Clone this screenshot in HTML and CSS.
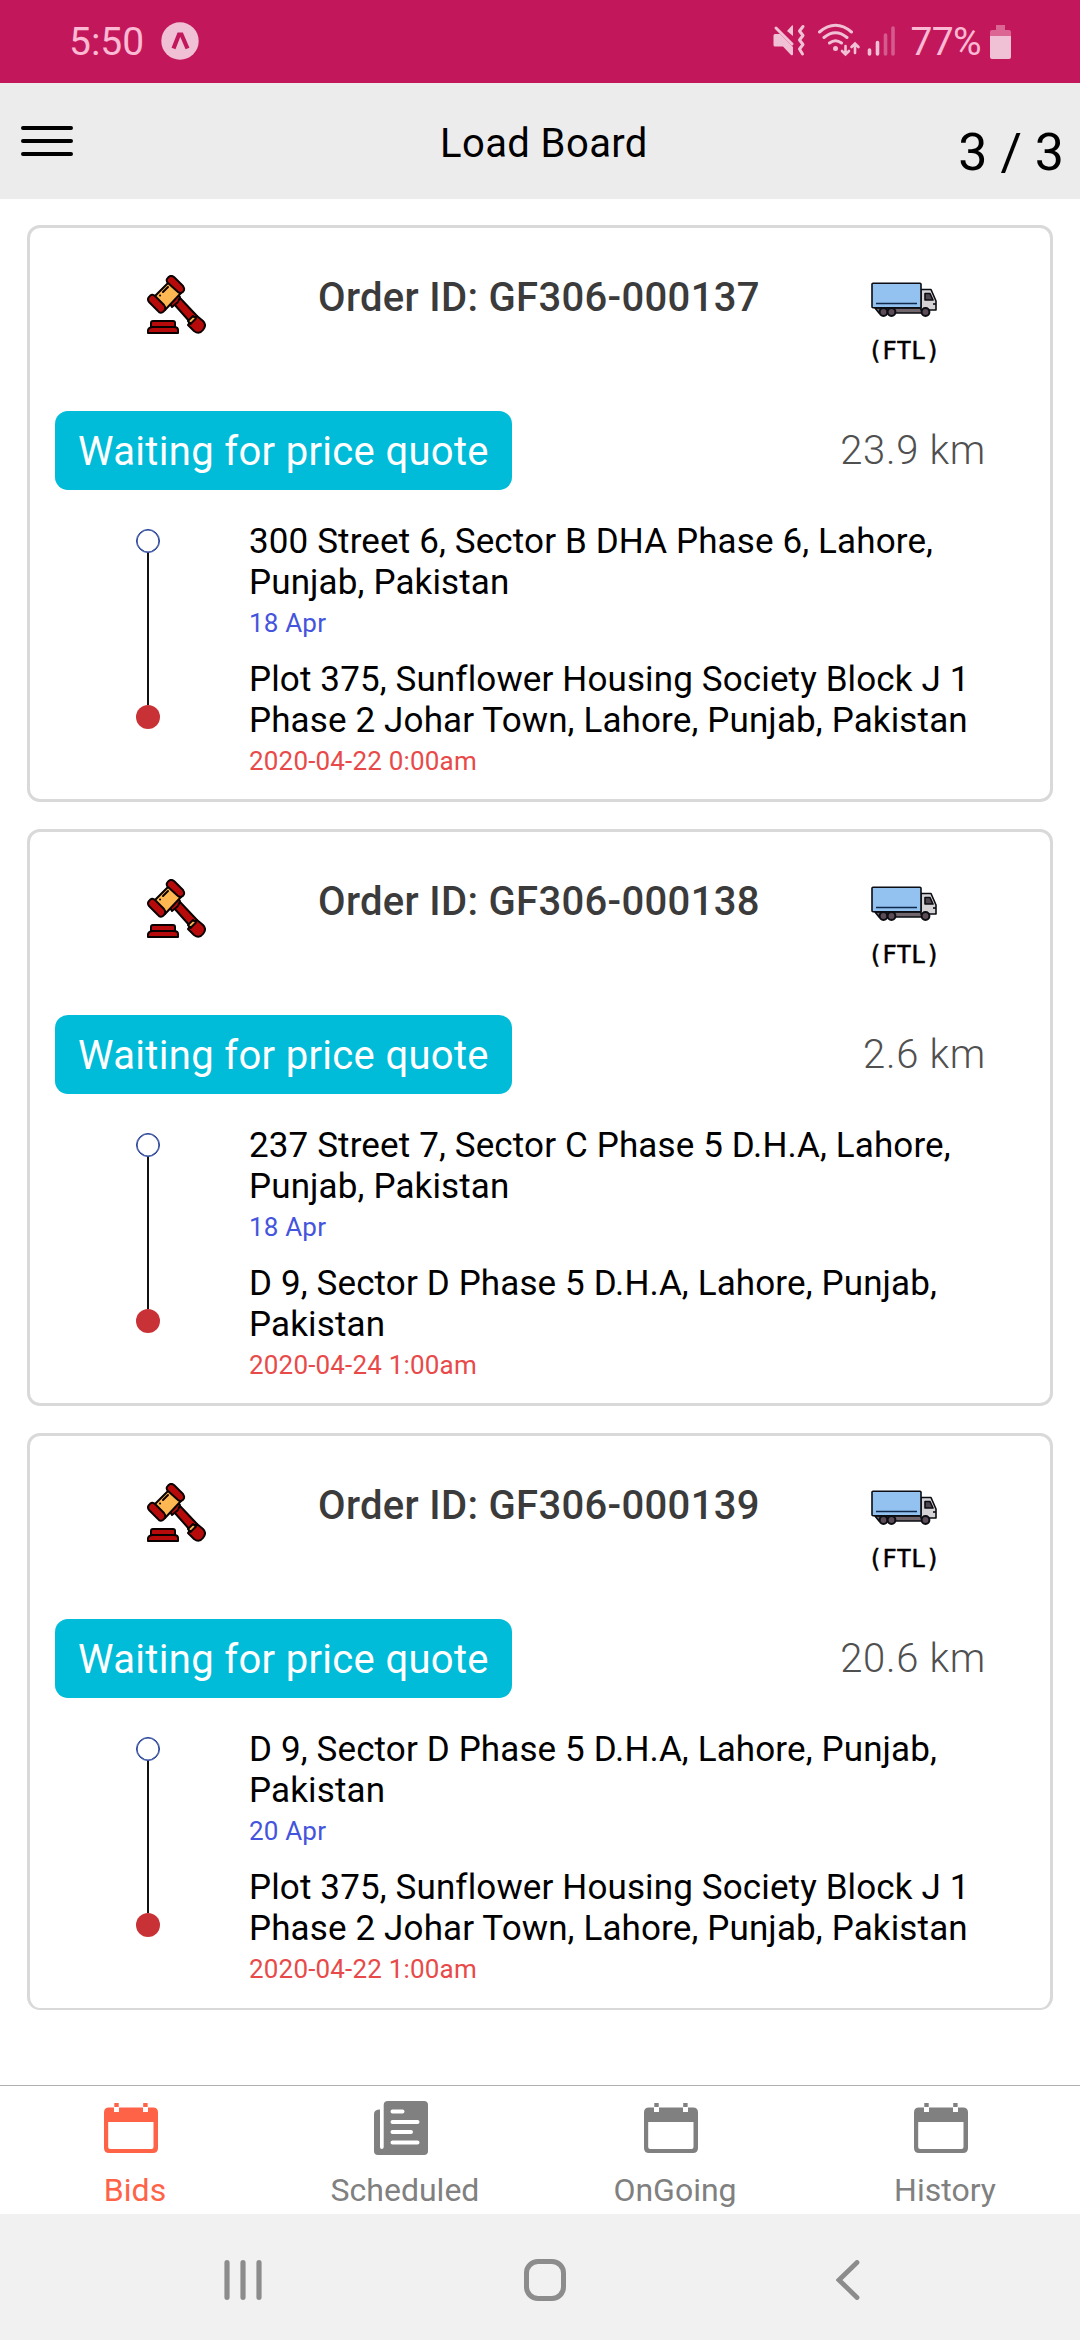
FILE: index.html
```html
<!DOCTYPE html>
<html lang="en">
<head>
<meta charset="utf-8">
<title>Load Board</title>
<link rel="stylesheet" href="styles.css">
</head>
<body>
<svg class="sprite" aria-hidden="true">
  <symbol id="gavel" viewBox="0 0 59 59">
    <g stroke="#0a0000" stroke-width="2" stroke-linejoin="round">
      <path d="M27 29 33 23 50 41 43 47Z" fill="#b70b0b"/>
      <path d="M43 47 50 41 56 46Q60 50 56 55 52 60 47 56L41 50Z" fill="#b70b0b"/>
      <path d="M41 46 46 41 49 43.500 43.500 49Z" fill="#ffb851"/>
      <path d="M21 26 30 18 33 22 31 27 25 32Z" fill="#b70b0b"/>
      <path d="M7 22 22 7 34 18 18 35Z" fill="#ffb851"/>
      <path d="M20 4Q23-1 27 2L36 11Q39 16 34 18 32 18 31 17L21 8Q19 6 20 4Z" fill="#b70b0b"/>
      <path d="M2 22Q5 18 8 21L17 30Q20 34 16 37 13 39 11 36L2 27Q0 24 2 22Z" fill="#b70b0b"/>
      <path d="M4 51V48Q4 46 6 46H26Q28 46 28 48V52H4Z" fill="#b70b0b"/>
      <path d="M1 58V55Q2 52 6 52H27Q31 52 31 55V58Z" fill="#b70b0b"/>
      <path d="M16 17 21 12" fill="none" stroke-linecap="round"/>
      <path d="M13 20.500h.1" fill="none" stroke-linecap="round"/>
    </g>
  </symbol>
  <symbol id="truck" viewBox="0 0 66 36">
    <g stroke="#0b0d12" stroke-width="1.600" stroke-linejoin="round">
      <path d="M4 26H58V31H8Z" fill="#71666c"/>
      <path d="M50 7.500H60L65 19V28H50Z" fill="#d5d3d6"/>
      <path d="M54 11.500H59L62 18H54Z" fill="#514750"/>
      <path d="M62 22H65" />
      <rect x="1" y="1.200" width="49" height="24.500" rx="1" fill="#93c1f0"/>
      <path d="M5 21.500H46" stroke="#102a4c" stroke-width="1.500"/>
      <g fill="#5b4c58" stroke-width="2"><circle cx="12.500" cy="30" r="3.900"/><circle cx="20.500" cy="30" r="3.900"/><circle cx="54.500" cy="30" r="3.900"/></g>
    </g>
  </symbol>
  <symbol id="calendar" viewBox="0 0 54 50">
    <path fill="currentColor" fill-rule="evenodd" d="M5 4.500H10V9H15V4.500H39V9H44V4.500H49Q54 4.500 54 9.500V45Q54 50 49 50H5Q0 50 0 45V9.500Q0 4.500 5 4.500ZM4.200 19V44Q4.200 46 6.200 46H47.500Q49.500 46 49.500 44V19ZM10.300 0H14.700V4H10.300ZM39.200 0H43.600V4H39.200Z"/>
  </symbol>
  <symbol id="news" viewBox="0 0 54 54">
    <path fill="currentColor" d="M14 0H50Q54 0 54 4V50Q54 54 50 54H4Q0 54 0 50V13Q0 8.500 6 8.500V46Q6 48 7.800 48 9.700 48 9.700 46V4Q9.700 0 14 0Z"/>
    <path stroke="#fff" stroke-width="4" stroke-linecap="round" d="M18.500 10.500H28.500M18.500 21H43.500M18.500 31H37M18.500 41.500H43.500"/>
  </symbol>
</svg>

<div class="status">
  <span class="clock">5:50</span>
  <svg class="expo" viewBox="0 0 38 38"><circle cx="19" cy="19" r="18.700" fill="#f0c0d5"/><path d="M12.500 26.500 18 12.500H20.500L26.500 26.500" fill="none" stroke="#c2185b" stroke-width="4.200"/></svg>
  <svg class="signals" viewBox="773 22 125 38">
    <g fill="#f0c0d5">
      <path d="M775 34H780L793 47V54Q793 56 791 55L783 46.500H775Q773.500 46.500 773.500 45V35.500Q773.500 34 775 34ZM787 31 792 25.500Q793 25 793 26V36Z"/>
    </g>
    <g fill="none" stroke="#f0c0d5" stroke-width="3" stroke-linecap="round">
      <path d="M776 28 792 44"/>
      <path d="M803 26.500 799.500 31 803 35.500 799.500 40 803 44.500 799.500 49 802.500 54" stroke-linejoin="round"/>
      <path d="M819.500 32Q835.500 18.500 851.500 32M824 37.500Q835.500 28 847 37.500M829.500 43Q835.500 38.500 841.500 43"/>
      <path d="M845.500 46V54M842 51 845.500 54.500 849 51M855 53V44M851.500 47 855 43.500 858.500 47" stroke-width="2.600"/>
      <path d="M869.500 50V54M877.500 42.500V54" stroke-width="3.600"/>
      <path d="M885.500 35V54M893 28V54" stroke-width="3.600" opacity=".4"/>
    </g>
    <circle cx="835.500" cy="48.500" r="2.500" fill="#f0c0d5"/>
  </svg>
  <span class="percent">77%</span>
  <svg class="battery" viewBox="0 0 21 34"><path d="M6 0H15V5H19Q21 5 21 7V12H0V7Q0 5 2 5H6Z" fill="#db6593"/><path d="M0 11H21V32Q21 34 19 34H2Q0 34 0 32Z" fill="#f0c0d5"/></svg>
</div>

<header class="header">
  <svg class="menu" viewBox="0 0 52 30"><path d="M2 2H50M2 15H50M2 28H50" stroke="#000" stroke-width="4" stroke-linecap="round"/></svg>
  <h1 class="title">Load Board</h1>
  <span class="count">3 / 3</span>
</header>

<main class="list">
  <article class="card">
    <div class="top">
      <svg class="gavel"><use href="#gavel"/></svg>
      <h2 class="order">Order ID: GF306-000137</h2>
      <div class="load"><svg class="truck"><use href="#truck"/></svg><span class="type">(FTL)</span></div>
    </div>
    <div class="middle"><span class="badge">Waiting for price quote</span><span class="distance">23.9 km</span></div>
    <div class="route">
      <div class="track"><i class="start"></i><i class="line"></i><i class="end"></i></div>
      <div class="stops">
        <p class="address">300 Street 6, Sector B DHA Phase 6, Lahore,<br>Punjab, Pakistan</p><p class="date pickup">18 Apr</p>
        <p class="address">Plot 375, Sunflower Housing Society Block J 1<br>Phase 2 Johar Town, Lahore, Punjab, Pakistan</p><p class="date drop">2020-04-22 0:00am</p>
      </div>
    </div>
  </article>
  <article class="card">
    <div class="top">
      <svg class="gavel"><use href="#gavel"/></svg>
      <h2 class="order">Order ID: GF306-000138</h2>
      <div class="load"><svg class="truck"><use href="#truck"/></svg><span class="type">(FTL)</span></div>
    </div>
    <div class="middle"><span class="badge">Waiting for price quote</span><span class="distance">2.6 km</span></div>
    <div class="route">
      <div class="track"><i class="start"></i><i class="line"></i><i class="end"></i></div>
      <div class="stops">
        <p class="address">237 Street 7, Sector C Phase 5 D.H.A, Lahore,<br>Punjab, Pakistan</p><p class="date pickup">18 Apr</p>
        <p class="address">D 9, Sector D Phase 5 D.H.A, Lahore, Punjab,<br>Pakistan</p><p class="date drop">2020-04-24 1:00am</p>
      </div>
    </div>
  </article>
  <article class="card">
    <div class="top">
      <svg class="gavel"><use href="#gavel"/></svg>
      <h2 class="order">Order ID: GF306-000139</h2>
      <div class="load"><svg class="truck"><use href="#truck"/></svg><span class="type">(FTL)</span></div>
    </div>
    <div class="middle"><span class="badge">Waiting for price quote</span><span class="distance">20.6 km</span></div>
    <div class="route">
      <div class="track"><i class="start"></i><i class="line"></i><i class="end"></i></div>
      <div class="stops">
        <p class="address">D 9, Sector D Phase 5 D.H.A, Lahore, Punjab,<br>Pakistan</p><p class="date pickup">20 Apr</p>
        <p class="address">Plot 375, Sunflower Housing Society Block J 1<br>Phase 2 Johar Town, Lahore, Punjab, Pakistan</p><p class="date drop">2020-04-22 1:00am</p>
      </div>
    </div>
  </article>
</main>

<nav class="tabs">
  <a class="tab active"><svg class="tab-icon"><use href="#calendar"/></svg><span>Bids</span></a>
  <a class="tab"><svg class="tab-icon"><use href="#news"/></svg><span>Scheduled</span></a>
  <a class="tab"><svg class="tab-icon"><use href="#calendar"/></svg><span>OnGoing</span></a>
  <a class="tab"><svg class="tab-icon"><use href="#calendar"/></svg><span>History</span></a>
</nav>

<footer class="system">
  <svg class="recents" viewBox="0 0 38 40"><path d="M3 2.700V37.300M19 2.700V37.300M35 2.700V37.300" stroke="#8c8c8c" stroke-width="5.200" stroke-linecap="round"/></svg>
  <svg class="home" viewBox="0 0 42 42"><rect x="2.500" y="2.500" width="37" height="37" rx="11.500" fill="none" stroke="#8c8c8c" stroke-width="5"/></svg>
  <svg class="back" viewBox="0 0 24 40"><path d="M21 2.500 3 20 21 37.500" fill="none" stroke="#8c8c8c" stroke-width="4.800" stroke-linecap="round"/></svg>
</footer>
</body>
</html>
```
FILE: styles.css
```css
* { box-sizing: border-box; }
body {
  margin: 0;
  width: 1080px;
  height: 2340px;
  display: flex;
  flex-direction: column;
  background: #fff;
  color: #000;
  font-family: Roboto, sans-serif;
  overflow: hidden;
}
h1, h2, p { margin: 0; font-weight: 400; }
svg { display: block; flex: none; }
.sprite { width: 0; height: 0; position: absolute; }

.status {
  height: 83px;
  background: #c2185b;
  display: flex;
  align-items: flex-start;
  color: #fbb9d3;
  font-size: 39px;
  line-height: 46px;
  padding: 19px 68px 0 69px;
}
.clock { width: 92px; }
.expo { width: 38px; height: 38px; margin-top: 3px; }
.signals { width: 125px; height: 38px; margin: 3px 0 0 574px; }
.percent { width: 83px; text-align: right; letter-spacing: -.6px; }
.battery { width: 21px; height: 34px; margin: 6px 0 0 9px; }

.header {
  height: 116px;
  background: #ececec;
  display: flex;
  align-items: flex-start;
  padding: 0 16px 0 21px;
}
.menu { width: 52px; height: 30px; margin-top: 43px; }
.title { flex: 1; padding: 37px 0 0 367px; font-size: 40px; line-height: 47px; letter-spacing: .4px; white-space: nowrap; }
.count { padding-top: 39px; font-size: 52px; line-height: 61px; }

.list {
  flex: 1;
  padding: 26px 27px 0;
  display: flex;
  flex-direction: column;
  gap: 27px;
}
.card {
  height: 577px;
  border: 3px solid #d9d9d9;
  border-radius: 13px;
}
.card:last-child { border-bottom-width: 2px; }
.top { height: 183px; display: flex; padding-left: 117px; }
.gavel { width: 59px; height: 59px; margin-top: 47px; }
.order {
  width: 552px;
  padding: 46px 0 0 112px;
  color: #3b3b3b;
  font-size: 40px;
  line-height: 47px;
  font-weight: 500;
  letter-spacing: .32px;
  white-space: nowrap;
}
.load { display: flex; flex-direction: column; align-items: center; width: 90px; padding-top: 54px; margin-left: 101px; }
.truck { width: 66px; height: 36px; }
.type {
  margin-top: 19px;
  font: 24px/28px "DejaVu Sans Mono", monospace;
  -webkit-text-stroke: .5px #000;
}
.middle { height: 79px; display: flex; justify-content: space-between; padding: 0 64px 0 25px; }
.badge {
  width: 457px;
  border-radius: 13px;
  background: #00bcd8;
  color: #fff;
  font-size: 40px;
  line-height: 81px;
  letter-spacing: .32px;
  padding-left: 23px;
  white-space: nowrap;
}
.distance { color: #505050; font-size: 40px; line-height: 80px; font-weight: 300; letter-spacing: .7px; }

.route { display: flex; padding: 31px 0 0 106px; }
.track { width: 24px; display: flex; flex-direction: column; align-items: center; padding-top: 8px; }
.start, .end { width: 24px; height: 24px; border-radius: 50%; }
.start { border: 1px solid #1d3a94; box-shadow: inset 0 0 0 .6px #1d3a94; }
.line { width: 2px; height: 152px; background: #111; }
.end { background: #c83236; }
.stops { margin-left: 89px; white-space: nowrap; }
.address { font-size: 35px; line-height: 41px; letter-spacing: .13px; }
.date { font-size: 26px; line-height: 31px; padding-top: 5px; letter-spacing: .18px; }
.pickup { color: #4454dc; margin-bottom: 20px; }
.drop { color: #e84a4a; }

.tabs { height: 129px; border-top: 1px solid #b0b0b0; display: grid; grid-template-columns: repeat(4, 1fr); }
.tab {
  display: flex;
  flex-direction: column;
  align-items: center;
  padding-top: 15px;
  color: #808080;
  font-size: 32px;
  line-height: 38px;
}
.tab-icon { width: 54px; height: 54px; margin: 0 8px 16px 0; }
.tab span { height: 38px; }
.active { color: #ff6347; }

.system { height: 126px; background: #f1f1f1; display: flex; align-items: center; padding: 6px 0 0 224px; }
.recents { width: 38px; height: 40px; }
.home { width: 42px; height: 42px; margin-left: 262px; }
.back { width: 24px; height: 40px; margin-left: 270px; }
```
